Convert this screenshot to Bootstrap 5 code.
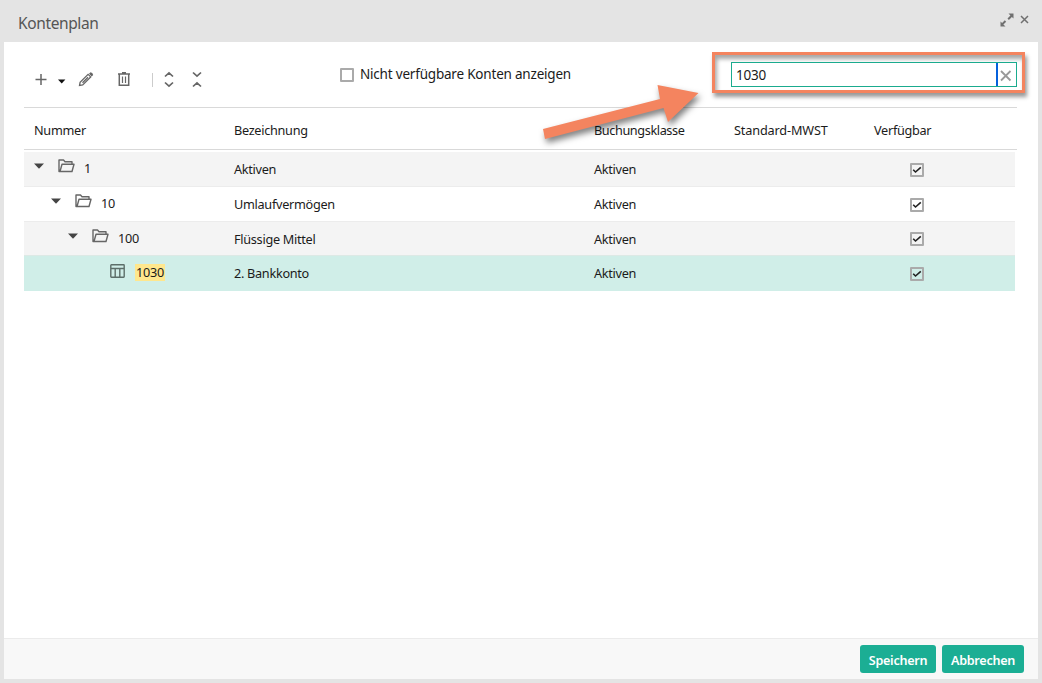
<!DOCTYPE html>
<html lang="de">
<head>
<meta charset="utf-8">
<meta name="viewport" content="width=device-width, initial-scale=1">
<title>Kontenplan</title>
<link href="https://cdn.jsdelivr.net/npm/bootstrap@5.3.0/dist/css/bootstrap.min.css" rel="stylesheet">
<style>
body{font-family:"Noto Sans","Open Sans",sans-serif;font-size:12.7px;letter-spacing:-.29px;line-height:18px;color:#1b1b1b;background:#e4e4e4;height:100vh;overflow:hidden}
svg{display:block;flex:none}
.dialog{height:683px;padding:0 4px 4px}
.titlebar{height:42px;padding:4px 9px 0 14px}
.titlebar h1{font-size:15.5px;line-height:20px;font-weight:400;letter-spacing:-.38px;color:#555;margin:0}
.winctl{gap:6px;margin-top:-6px}
.pane{padding:0 21px 0 20px}
.tools{height:66px;border-bottom:1px solid #d9d9d9}
.tools>.icons{width:312px;padding:10px 0 0 8px}
.opt{font-size:13.5px;letter-spacing:-.2px;width:391px;padding-left:4px;gap:6px}
.opt span:last-child{margin-top:-1px}
.box{width:14px;height:14px;border:2px solid #aaa;border-radius:1px;flex:none;background:#fff}
.frame{flex:none;width:313px;height:41px;margin:10px -10px 0 -15px;border:3px solid #f4845f;padding:6px;box-shadow:2px 4px 4px rgba(0,0,0,.4),inset 2px 4px 4px rgba(0,0,0,.35)}
.search{width:286px;height:25px;margin:1px 0 0 10px;border:1px solid #1aab8e;background:#fff}
.search input{border:0;outline:0;padding:1px 0 0 4px;font-size:13.5px;letter-spacing:-.2px;height:23px;width:264px;color:#1b1b1b;background:none}
.search .clear{width:20px;height:23px;border-left:2px solid #0561dc;padding:6px 0 0 1px}
.line{display:grid;grid-template-columns:200px 360px 140px 140px 1fr;padding-left:10px}
.head{height:42px;border-bottom:1px solid #d9d9d9;align-items:center;padding-top:2px}
.rows{margin:2px 2px 0 0}
.rows .line{height:35px;border-bottom:1px solid #ececec;align-items:center}
.rows .line:nth-child(odd){background:#f4f4f4}
.rows .line:nth-child(3){height:34px;border-bottom-color:#dde9e5}
.rows .line.chosen{background:#d0eee8;border-color:#d0eee8}
.tree{margin-top:-2px}
.lvl1{padding-left:17px}.lvl2{padding-left:34px}.lvl3{padding-left:76px}
.caret{margin:4px 14px 0 0}
.hit{background:#ffe78d;padding:0 1px;margin-left:10px;line-height:17px}
.chk{margin:1px 0 0 36px;background:transparent}
.rows .line:nth-child(3) .chk{margin-top:0}
.bottom{height:41px;background:#f8f8f8;border-top:1px solid #ebebeb;padding:0 14px 0 0;gap:6px}
.act{height:28px;padding:2px 0 0;font-size:12.6px;letter-spacing:-.28px;line-height:28px;font-weight:600;color:#fff;background:#1bae94;border:0;border-radius:3px}
.arrow{position:absolute;left:530px;top:72px;filter:drop-shadow(2px 4px 3px rgba(0,0,0,.5))}
</style>
</head>
<body>
<div class="dialog d-flex flex-column position-relative">
  <header class="titlebar d-flex align-items-center justify-content-between">
    <h1>Kontenplan</h1>
    <div class="winctl d-flex">
      <svg width="14" height="14" viewBox="0 0 14 14" fill="#707070"><path d="M8.500 .5h5v5l-1.600-1.600-3 3-1.400-1.400 2.900-2.900zM.5 13.500v-5l1.600 1.600 2.700-2.800 1.400 1.400-2.800 2.800 2.100 2z"/></svg>
      <svg width="9" height="14" viewBox="0 0 9 14" stroke="#707070" stroke-width="1.5"><path d="M1 3l7 7M8 3l-7 7"/></svg>
    </div>
  </header>
  <main class="bg-white flex-grow-1 pane">
    <div class="tools d-flex">
      <div class="icons d-flex align-items-center">
        <svg width="185" height="24" viewBox="0 0 185 24" fill="none" stroke="#666" stroke-width="1.5">
          <path d="M9 6v11M3.500 11.500h11"/>
          <path d="M26 11.500h7.400L29.700 15.500z" fill="#111" stroke="none"/>
          <path d="M47.500 17.500l.6-3.200 8-8 2.600 2.600-8 8zM50.500 14.800l5.500-5.500" stroke-width="1.3"/><path d="M57 5.800l1.500-1.500q2.200.3 2.700 2.700l-1.500 1.500z" fill="#666" stroke="none"/>
          <path d="M86 6h12M90 4.800h4M87.300 6v11.300h9.400V6"/><path d="M90.500 8.500v6.500M93.500 8.500v6.500" stroke-width="1.2"/>
          <path d="M120.500 5v14" stroke="#ccc" stroke-width="1"/>
          <path d="M133 8.500l4-3.700 4 3.700M133 14.500l4 3.700 4-3.700M161 4.500l4 3.700 4-3.700M161 18.500l4-3.700 4 3.700" stroke-width="1.7"/>
        </svg>
      </div>
      <label class="opt d-flex align-items-center"><span class="box"></span><span>Nicht verfügbare Konten anzeigen</span></label>
      <div class="frame">
        <div class="search d-flex">
          <input type="text" value="1030" aria-label="Suche">
          <span class="clear"><svg width="14" height="14" viewBox="0 0 14 14" stroke="#999" stroke-width="1.8"><path d="M2 2l9.500 9.500M11.500 2L2 11.500"/></svg></span>
        </div>
      </div>
    </div>
    <div class="line head"><span>Nummer</span><span>Bezeichnung</span><span style="letter-spacing:-.4px">Buchungsklasse</span><span style="letter-spacing:-.15px">Standard-MWST</span><span>Verfügbar</span></div>
    <div class="rows" id="rows"></div>
  </main>
  <footer class="bottom d-flex align-items-center justify-content-end">
    <button class="act btn" style="width:76px">Speichern</button>
    <button class="act btn" style="width:82px">Abbrechen</button>
  </footer>
  <svg class="arrow" width="180" height="80" viewBox="0 0 180 80"><path d="M13 57L130 27 127.500 13 168.500 21 138 50 133.500 36 15 67z" fill="#f4845f"/></svg>
</div>
<script>
const folder = '<svg width="17" height="14" viewBox="0 0 17 14" fill="none" stroke="#666" stroke-width="1.4" stroke-linejoin="round"><path d="M2 12.500H1V1h4.500l1.500 1.700h7V5M2 12.500L4 5.300h12l-2 7.200z"/></svg>';
const sheet = '<svg width="15" height="14" viewBox="0 0 15 14" fill="none" stroke="#5c6e69" stroke-width="1.4"><rect x=".8" y=".8" width="13.400" height="12.400" rx=".6"/><path d="M1 4.500h13M5.200 4.500V13M9.800 4.500V13"/></svg>';
const caret = '<svg width="10" height="6" viewBox="0 0 10 6" fill="#444"><path d="M0 .5h10L5 5.700z"/></svg>';
const data = [['1','Aktiven'],['10','Umlaufvermögen'],['100','Flüssige Mittel'],['1030','2. Bankkonto']];
document.getElementById('rows').innerHTML = data.map(([n, t], i) => {
  const leaf = i === 3;
  const tree = leaf
    ? `<span class="tree d-flex lvl3">${sheet}<span class="hit">${n}</span></span>`
    : `<span class="tree d-flex lvl${i}"><span class="caret">${caret}</span><span style="margin-right:9px">${folder}</span><span>${n}</span></span>`;
  return `<div class="line ${leaf ? 'chosen' : ''}">${tree}<span>${t}</span><span>Aktiven</span><span></span><span><span class="box chk d-block"><svg width="10" height="10" viewBox="0 0 10 10" fill="none" stroke="#222" stroke-width="1.6"><path d="M1.200 4.700l2.300 2.300L8.800 2.300"/></svg></span></span></div>`;
}).join('');
</script>
<script src="https://cdn.jsdelivr.net/npm/bootstrap@5.3.0/dist/js/bootstrap.bundle.min.js"></script>
</body>
</html>
